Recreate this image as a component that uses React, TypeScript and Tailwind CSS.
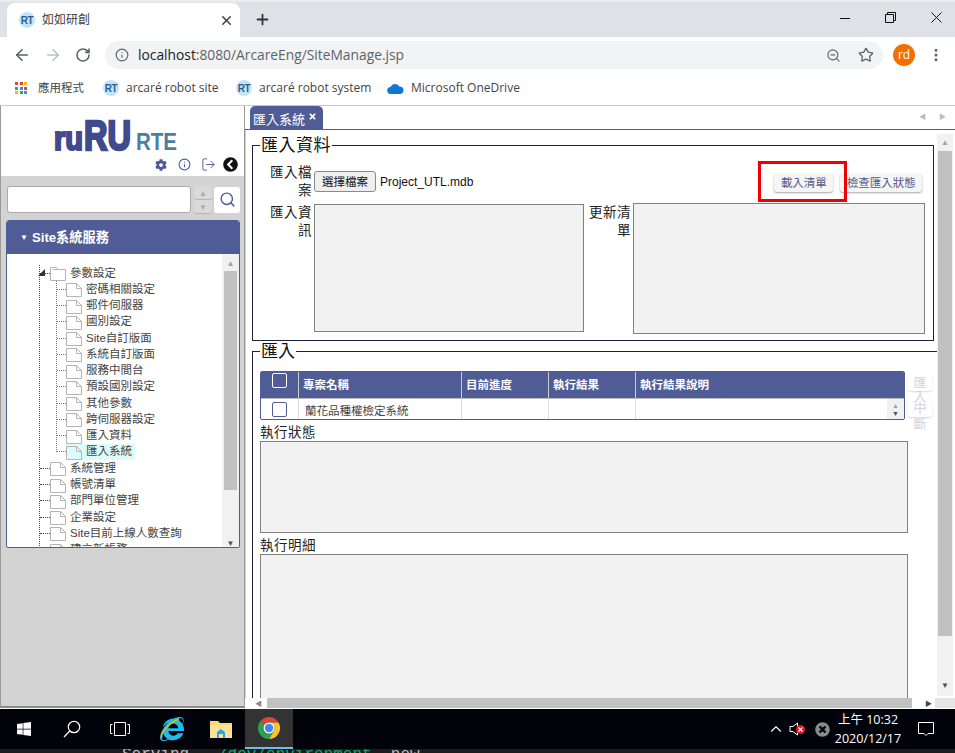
import { ArrowLeft, ArrowRight, ChevronUp, Info, LogOut, MoreVertical, Plus, RotateCw, Search, Star, X, ZoomOut } from "lucide-react"
import { FaChevronCircleLeft, FaCog, FaInternetExplorer, FaTimes, FaTimesCircle, FaWindows } from "react-icons/fa"

const sans = "font-['Liberation_Sans','Noto_Sans_CJK_TC',sans-serif]"
const uiFont = "font-['Open_Sans','Noto_Sans_CJK_TC',sans-serif]"

const childItems = ["密碼相關設定", "郵件伺服器", "國別設定", "Site自訂版面", "系統自訂版面", "服務中間台", "預設國別設定", "其他參數", "跨伺服器設定", "匯入資料", "匯入系統"]
const rootItems = ["系統管理", "帳號清單", "部門單位管理", "企業設定", "Site目前上線人數查詢", "建立新帳務"]

function RtIcon() {
  return (
    <span className="flex h-[16px] w-[16px] shrink-0 items-center justify-center rounded-full bg-[#c5e3f6] font-['Liberation_Sans',sans-serif] text-[10px] font-bold tracking-[-0.5px] text-[#2b5f8f]">
      RT
    </span>
  )
}

function FileIcon() {
  return (
    <svg width="16" height="16" viewBox="0 0 16 16" className="shrink-0" fill="none" stroke="#b5b5b5">
      <path d="M0.5 2.5H10.5L15.5 7.5V15.5H0.5Z" />
      <path d="M10.5 2.5V7.5H15.5" />
    </svg>
  )
}

function FolderIcon() {
  return (
    <svg width="16" height="16" viewBox="0 0 16 16" className="shrink-0" fill="none" stroke="#b5b5b5">
      <path d="M0.5 15.5V2.5H6.5L8 4.5H15.5V15.5Z" />
      <path d="M2.5 4.5H8" />
    </svg>
  )
}

function ChromeLogo() {
  return (
    <svg width="22" height="22" viewBox="0 0 24 24">
      <path d="M12 0A12 12 0 0 1 22.4 6H12A6 6 0 0 0 6.8 9L3.2 3.8A12 12 0 0 1 12 0Z" fill="#db4437" />
      <path d="M22.4 6A12 12 0 0 1 12 24L17.2 15A6 6 0 0 0 17.2 9 6 6 0 0 0 12 6Z" fill="#fbc02d" />
      <path d="M3.2 3.8L6.8 9A6 6 0 0 0 12 18 6 6 0 0 0 17.2 15L12 24A12 12 0 0 1 3.2 3.8Z" fill="#2e9e4f" />
      <circle cx="12" cy="12" r="6" fill="#fff" />
      <circle cx="12" cy="12" r="4.6" fill="#4285f4" />
    </svg>
  )
}

function Tree() {
  return (
    <div className={`h-[293px] flex-1 overflow-hidden pt-[11px] text-[11.5px] text-[#444] ${sans}`}>
      <div className="ml-[32px] border-l border-dotted border-[#444]">
        <div className="relative flex h-[16.25px] items-center">
          <span className="w-[10px] border-t border-dotted border-[#444]" />
          <FolderIcon />
          <span className="ml-[4px]">參數設定</span>
          <svg width="9" height="9" viewBox="0 0 9 9" className="absolute left-[-3px] top-[3px]">
            <path d="M8 1V8H1Z" fill="#333" />
          </svg>
        </div>
        <div className="mb-[8px] ml-[16px] h-[171px] border-l border-dotted border-[#777]">
          {childItems.map((item, i) => (
            <div key={item} className="flex h-[16.25px] items-center">
              <span className="w-[9px] border-t border-dotted border-[#777]" />
              <div className={`flex h-[16px] items-center pr-[3px] ${i === 10 ? "bg-[#dcfbfd]" : ""}`}>
                <FileIcon />
                <span className="ml-[4px] whitespace-nowrap">{item}</span>
              </div>
            </div>
          ))}
        </div>
        {rootItems.map((item) => (
          <div key={item} className="flex h-[16.25px] items-center">
            <span className="w-[10px] border-t border-dotted border-[#444]" />
            <FileIcon />
            <span className="ml-[4px] whitespace-nowrap">{item}</span>
          </div>
        ))}
      </div>
    </div>
  )
}

function Sidebar() {
  return (
    <div className="flex w-[245px] shrink-0 flex-col border-x border-b-2 border-x-[#9a9a9a] border-b-[#8c8c8c] bg-[#d3d3d3]">
      <div className="h-[70px] bg-white pl-[53px] pt-[12px]">
        <svg width="125" height="33" viewBox="0 0 125 33" className="block overflow-visible">
          <text x="0" y="32" fontFamily="Liberation Sans" fontWeight="700" fontSize="33" fill="#3f4b8c" stroke="#3f4b8c" strokeWidth="2.2" textLength="29" lengthAdjust="spacingAndGlyphs">ru</text>
          <text x="30" y="32" fontFamily="Liberation Sans" fontWeight="700" fontSize="43" fill="#3f4b8c" stroke="#3f4b8c" strokeWidth="2.6" textLength="47" lengthAdjust="spacingAndGlyphs">RU</text>
          <text x="82" y="32" fontFamily="Liberation Sans" fontWeight="700" fontSize="24" fill="#4a7fa3" textLength="41" lengthAdjust="spacingAndGlyphs">RTE</text>
        </svg>
        <div className="-ml-[53px] mt-[6px] flex items-center">
          <span className="w-[150px]" />
          <span className="flex w-[20px] justify-center"><FaCog size={12} className="text-[#4a5a96]" /></span>
          <span className="flex w-[26px] justify-center"><Info size={13} className="text-[#4a5a96]" /></span>
          <span className="flex w-[22px] justify-center"><LogOut size={15} strokeWidth={1.5} className="text-[#4a5a96]" /></span>
          <span className="flex w-[22px] justify-center"><FaChevronCircleLeft size={15} className="text-[#111]" /></span>
        </div>
      </div>
      <div className="flex h-[44px] items-center pl-[6px] pt-[3px]">
        <div className="h-[27px] w-[184px] rounded-[3px] border border-[#aaa] bg-white" />
        <div className="ml-[3px] flex w-[18px] flex-col gap-[1px]">
          <span className="flex h-[13px] items-center justify-center rounded-[3px] bg-[#d9d9d9] shadow-[0_1px_1px_rgba(0,0,0,0.15)]"><span className="text-[8px] leading-none text-[#a8a8c8]">▲</span></span>
          <span className="flex h-[13px] items-center justify-center rounded-[3px] bg-[#d9d9d9] shadow-[0_1px_1px_rgba(0,0,0,0.15)]"><span className="text-[8px] leading-none text-[#a8a8c8]">▼</span></span>
        </div>
        <div className="ml-[2px] flex h-[26px] w-[26px] items-center justify-center rounded-[3px] bg-white">
          <Search size={17} strokeWidth={2} className="text-[#4a5a96]" />
        </div>
      </div>
      <div className="mx-[5px] flex h-[328px] w-[234px] flex-col overflow-hidden rounded-t-[3px] rounded-b-[2px] border border-[#505c96] bg-white">
        <div className={`flex h-[33px] shrink-0 items-center bg-[#505c96] pl-[13px] text-[13.2px] font-bold text-white ${sans}`}>
          <span className="mr-[4px] text-[8px] leading-none">▼</span>Site系統服務
        </div>
        <div className="flex flex-1">
          <Tree />
          <div className="flex h-[293px] w-[17px] flex-col items-center bg-[#f1f1f1]">
            <span className="mt-[5px] text-[8px] leading-none text-[#a3a3a3]">▲</span>
            <span className="mt-[4px] h-[219px] w-[13px] bg-[#c1c1c1]" />
            <span className="mt-[49px] text-[8px] leading-none text-[#505050]">▼</span>
          </div>
        </div>
      </div>
    </div>
  )
}

function SoftButton({ label, width }: { label: string; width: string }) {
  return (
    <button className={`h-[18px] ${width} whitespace-nowrap rounded-[3px] bg-[#f5f5f5] text-center text-[11.5px] leading-[18px] text-[#55598a] shadow-[0_1px_2px_rgba(0,0,0,0.35)]`}>
      {label}
    </button>
  )
}

function ImportSection() {
  return (
    <fieldset className="relative ml-[6px] h-[205px] w-[682px] border border-[#1d2040] pb-0">
      <legend className="ml-[7px] px-[1px] text-[17px] leading-[19px] tracking-[0.5px] text-[#111]">匯入資料</legend>
      <div className="flex pl-[16px] pt-[9px]">
        <span className="w-[43px] text-right text-[13.5px] leading-[18px] tracking-[0.5px] text-[#222]">匯入檔案</span>
        <button className="ml-[2px] mt-[7px] h-[21px] w-[62px] whitespace-nowrap rounded-[3px] border border-[#8a8a8a] bg-[#efefef] text-[11.5px] leading-[18px] text-[#111]">選擇檔案</button>
        <span className="ml-[4px] mt-[9px] text-[12px] leading-[18px] text-[#111]">Project_UTL.mdb</span>
        <div className="ml-[301px] mt-[10px] flex gap-[7px]">
          <SoftButton label="載入清單" width="w-[59px]" />
          <SoftButton label="檢查匯入狀態" width="w-[82px]" />
        </div>
      </div>
      <div className="mt-[4px] flex pl-[16px]">
        <span className="w-[43px] text-right text-[13.5px] leading-[18px] tracking-[0.5px] text-[#222]">匯入資訊</span>
        <div className="ml-[2px] h-[128px] w-[270px] border border-[#808080] bg-[#f2f2f2]" />
        <span className="ml-[4px] w-[43px] text-right text-[13.5px] leading-[18px] tracking-[0.5px] text-[#222]">更新清單</span>
        <div className="ml-[2px] -mt-[1px] h-[131px] w-[292px] border border-[#808080] bg-[#f2f2f2]" />
      </div>
      <div className="absolute left-[505px] top-[6px] h-[41px] w-[89px] border-[3px] border-[#f00000]" />
    </fieldset>
  )
}

function RunSection() {
  return (
    <fieldset className="ml-[6px] mt-[1px] h-[400px] w-[686px] border border-[#1d2040]">
      <legend className="ml-[7px] px-[1px] text-[17px] leading-[19px] text-[#111]">匯入</legend>
      <div className="ml-[7px] mt-[10px] flex">
        <div className="h-[49px] w-[645px] overflow-hidden rounded-[2px] border border-[#505c96]">
          <div className="flex h-[27px] border-b border-[#bbb] bg-[#505c96] text-[11.5px] font-bold leading-[26px] text-white">
            <span className="flex w-[38px] justify-center border-r border-[#ccc] pt-[1px]">
              <span className="h-[15px] w-[15px] rounded-[2px] border border-white" />
            </span>
            <span className="w-[163px] border-r border-[#ccc] pl-[4px]">專案名稱</span>
            <span className="w-[87px] border-r border-[#ccc] pl-[4px]">目前進度</span>
            <span className="w-[87px] border-r border-[#ccc] pl-[4px]">執行結果</span>
            <span className="pl-[4px]">執行結果說明</span>
          </div>
          <div className="flex h-[21px] text-[11.5px] leading-[24px] text-[#444]">
            <span className="flex w-[38px] items-center justify-center border-r border-[#ddd]">
              <span className="h-[15px] w-[15px] rounded-[2px] border border-[#505c96]" />
            </span>
            <span className="w-[163px] border-r border-[#ddd] pl-[6px]">蘭花品種權檢定系統</span>
            <span className="w-[87px] border-r border-[#ddd]" />
            <span className="w-[87px] border-r border-[#ddd]" />
            <span className="flex-1" />
            <span className="flex w-[17px] flex-col items-center bg-[#f1f1f1] pt-[3px]">
              <span className="text-[7px] leading-[8px] text-[#a3a3a3]">▲</span>
              <span className="text-[7px] leading-[8px] text-[#505050]">▼</span>
            </span>
          </div>
        </div>
        <div className="ml-[3px] flex w-[24px] flex-col gap-[8px] pt-[2px]">
          <span className="h-[18px] rounded-[3px] bg-white px-[5px] pt-[3px] text-center text-[13px] leading-[14px] text-[#d2d2e2] shadow-[0_1px_2px_rgba(0,0,0,0.15)]">匯入</span>
          <span className="h-[18px] rounded-[3px] px-[5px] pt-[1px] text-center text-[13px] leading-[16px] text-[#d2d2e2] shadow-[0_1px_2px_rgba(0,0,0,0.15)]">中斷</span>
        </div>
      </div>
      <div className="ml-[7px] mt-[4px] text-[13.5px] leading-[17px] tracking-[0.5px] text-[#222]">執行狀態</div>
      <div className="ml-[7px] h-[92px] w-[648px] border border-[#808080] bg-[#f2f2f2]" />
      <div className="ml-[7px] mt-[4px] text-[13.5px] leading-[17px] tracking-[0.5px] text-[#222]">執行明細</div>
      <div className="ml-[7px] h-[200px] w-[648px] border border-[#808080] bg-[#f2f2f2]" />
    </fieldset>
  )
}

function MainPanel() {
  return (
    <div className={`flex min-w-0 flex-1 flex-col bg-white ${sans}`}>
      <div className="flex h-[24px] items-end justify-between border-b border-[#505c96] pl-[5px] pr-[9px]">
        <div className="flex h-[23px] w-[73px] items-center rounded-t-[5px] bg-[#505c96] pl-[3px] pt-[4px] text-[13px] text-white">
          匯入系統<FaTimes size={9} className="ml-[3px] -mt-[7px]" />
        </div>
        <div className="mb-[9px] flex gap-[13px] text-[7px] leading-none text-[#bbb]">
          <span>◀</span>
          <span>▶</span>
        </div>
      </div>
      <div className="flex h-[568px] border-l border-[#ccc]">
        <div className="w-[691px] shrink-0 overflow-hidden pt-[6px]">
          <ImportSection />
          <RunSection />
        </div>
        <div className="mt-[4px] flex h-[562px] w-[16px] flex-col items-center bg-[#f1f1f1]">
          <span className="mt-[5px] text-[8px] leading-none text-[#a3a3a3]">▲</span>
          <span className="mt-[4px] h-[485px] w-[14px] bg-[#c1c1c1]" />
          <span className="mt-[46px] text-[8px] leading-none text-[#505050]">▼</span>
        </div>
      </div>
      <div className="flex h-[10px] items-center">
        <span className="flex w-[22px] justify-end bg-white pr-[5px] text-[7px] leading-none text-[#888]">◀</span>
        <span className="h-[10px] w-[645px] bg-[#c1c1c1]" />
        <span className="flex w-[23px] justify-end pr-[3px] text-[7px] leading-none text-[#444]">▶</span>
        <span className="h-[10px] flex-1 bg-[#e6e6e6]" />
      </div>
    </div>
  )
}

function BrowserChrome() {
  return (
    <div className={`shrink-0 ${uiFont}`}>
      <div className="flex h-[37px] items-end border-t-2 border-[#ececec] bg-[#dee1e6] pl-[7px]">
        <div className="flex h-[34px] w-[233px] items-center rounded-t-[8px] bg-white pl-[12px] pr-[6px]">
          <RtIcon />
          <span className="ml-[7px] flex-1 text-[12px] text-[#3c4043]">如如研創</span>
          <X size={15} strokeWidth={2.5} className="text-[#444]" />
        </div>
        <Plus size={17} strokeWidth={2.5} className="mb-[9px] ml-[14px] text-[#333]" />
        <div className="mb-[14px] ml-auto flex items-center pr-[13px]">
          <svg width="10" height="10" viewBox="0 0 10 10" className="mr-[35px]"><path d="M0 5.5H10" stroke="#111" /></svg>
          <svg width="11" height="11" viewBox="0 0 11 11" className="mr-[35px]" fill="none" stroke="#111"><path d="M0.5 2.5H8.5V10.5H0.5Z M2.5 2.5V0.5H10.5V8.5H8.5" /></svg>
          <svg width="11" height="11" viewBox="0 0 11 11" stroke="#111"><path d="M0.5 0.5L10.5 10.5M10.5 0.5L0.5 10.5" /></svg>
        </div>
      </div>
      <div className="flex h-[34px] items-center bg-white pl-[13px] pt-[2px]">
        <ArrowLeft size={18} strokeWidth={2.2} className="text-[#5f6368]" />
        <ArrowRight size={18} strokeWidth={2.2} className="ml-[13px] text-[#bdc1c6]" />
        <RotateCw size={16} strokeWidth={2.4} className="ml-[13px] text-[#5f6368]" />
        <div className="ml-[14px] flex h-[28px] w-[778px] items-center rounded-full bg-[#f1f3f4] pl-[10px] pr-[9px]">
          <Info size={14} strokeWidth={2} className="text-[#5f6368]" />
          <span className="ml-[9px] flex-1 text-[13.8px] text-[#5f6368]"><span className="text-[#202124]">localhost</span>:8080/ArcareEng/SiteManage.jsp</span>
          <ZoomOut size={15} strokeWidth={1.8} className="text-[#5f6368]" />
          <Star size={16} strokeWidth={2} className="ml-[17px] text-[#5f6368]" />
        </div>
        <span className="ml-[10px] flex h-[22px] w-[22px] items-center justify-center rounded-full bg-[#f36f00] text-[12px] text-white">rd</span>
        <MoreVertical size={16} strokeWidth={2.5} className="ml-[13px] text-[#5f6368]" />
      </div>
      <div className="flex h-[35px] items-center border-b border-[#c8c8c8] bg-white pl-[15px] text-[12px] text-[#444]">
        <div className="grid h-[12px] w-[12px] grid-cols-3 gap-[1.5px]">
          <span className="bg-[#ea4335]" /><span className="bg-[#ea4335]" /><span className="bg-[#fbbc05]" />
          <span className="bg-[#34a853]" /><span className="bg-[#4285f4]" /><span className="bg-[#ea4335]" />
          <span className="bg-[#fbbc05]" /><span className="bg-[#34a853]" /><span className="bg-[#4285f4]" />
        </div>
        <span className="ml-[11px] w-[46px] whitespace-nowrap text-[11.5px]">應用程式</span>
        <span className="ml-[19px]"><RtIcon /></span>
        <span className="ml-[7px] w-[94px] whitespace-nowrap">arcaré robot site</span>
        <span className="ml-[16px]"><RtIcon /></span>
        <span className="ml-[7px] w-[112px] whitespace-nowrap">arcaré robot system</span>
        <svg width="17" height="12" viewBox="0 0 17 12" className="ml-[16px]">
          <path d="M4 12A3.5 3.5 0 0 1 3.5 5 5 5 0 0 1 12.500 4.500 3.800 3.800 0 0 1 13.500 12Z" fill="#0f78d4" />
        </svg>
        <span className="ml-[7px] whitespace-nowrap">Microsoft OneDrive</span>
      </div>
    </div>
  )
}

function Taskbar() {
  return (
    <>
      <div className={`flex h-[41px] shrink-0 items-center border-t border-white bg-[#02030a] text-white ${uiFont}`}>
        <span className="flex w-[48px] justify-center"><FaWindows size={16} /></span>
        <span className="flex w-[48px] justify-center">
          <svg width="18" height="18" viewBox="0 0 18 18" fill="none" stroke="#fff" strokeWidth="1.2"><circle cx="11" cy="7" r="5.7" /><path d="M6.8 11L1 17" /></svg>
        </span>
        <span className="flex w-[48px] justify-center">
          <svg width="20" height="14" viewBox="0 0 20 14" fill="none" stroke="#fff"><path d="M4.500 0.500H15.500V13.500H4.500Z M2.500 2.500H0.500V11.500H2.500 M17.500 2.500H19.500V11.500H17.500" /></svg>
        </span>
        <span className="ml-[3px] flex w-[49px] justify-center">
          <span className="relative flex">
            <FaInternetExplorer size={24} className="text-[#1ebbee]" />
            <svg width="26" height="26" viewBox="0 0 26 26" className="absolute -left-[1px] -top-[1px]" fill="none"><path d="M3 22C1 18 8 8 20 3" stroke="#f0b400" strokeWidth="1.500" /></svg>
          </span>
        </span>
        <span className="flex w-[49px] justify-center">
          <svg width="22" height="18" viewBox="0 0 22 18">
            <path d="M0 1H8L10 3H22V18H0Z" fill="#f8d775" />
            <path d="M0 5H22V18H0Z" fill="#fbe29a" />
            <path d="M7 12L11 9L15 12V18H13V14H9V18H7Z" fill="#2aa4e6" />
          </svg>
        </span>
        <span className="flex h-full w-[48px] items-center justify-center border-b-2 border-[#76b9ed] bg-[#333]"><ChromeLogo /></span>
        <div className="ml-auto flex items-center pr-[21px]">
          <ChevronUp size={18} strokeWidth={1.5} className="mr-[4px]" />
          <span className="relative mr-[12px] flex">
            <svg width="14" height="14" viewBox="0 0 14 14" fill="none" stroke="#fff"><path d="M1 4.500H4L8.500 1V13L4 9.500H1Z" /></svg>
            <span className="absolute left-[7px] top-[3px] flex h-[9px] w-[9px] items-center justify-center rounded-full bg-[#e81123]"><X size={7} strokeWidth={4} /></span>
          </span>
          <FaTimesCircle size={15} className="mr-[3px] text-[#8a8a8a]" />
          <span className="mr-[15px] flex w-[70px] flex-col items-center text-[12.5px] leading-[19px]">
            <span>上午 10:32</span>
            <span className="whitespace-nowrap">2020/12/17</span>
          </span>
          <svg width="16" height="16" viewBox="0 0 16 16" fill="none" stroke="#fff"><path d="M0.500 1.500H15.500V12.500H10L8 14.500L6 12.500H0.500Z" /></svg>
        </div>
      </div>
      <div className="h-[4px] shrink-0 overflow-hidden bg-[#1c1c1c] pl-[122px] font-['Liberation_Mono',monospace] text-[16px] leading-none text-[#bbb]">
        <div className="-mt-[2px] whitespace-nowrap">Serving <span className="text-[#0fa868]">`./dev/environment`</span> now</div>
      </div>
    </>
  )
}

export default function App() {
  return (
    <div className="flex h-[753px] w-[955px] flex-col overflow-hidden bg-white">
      <BrowserChrome />
      <div className="flex h-[602px] shrink-0">
        <Sidebar />
        <MainPanel />
      </div>
      <Taskbar />
    </div>
  )
}
